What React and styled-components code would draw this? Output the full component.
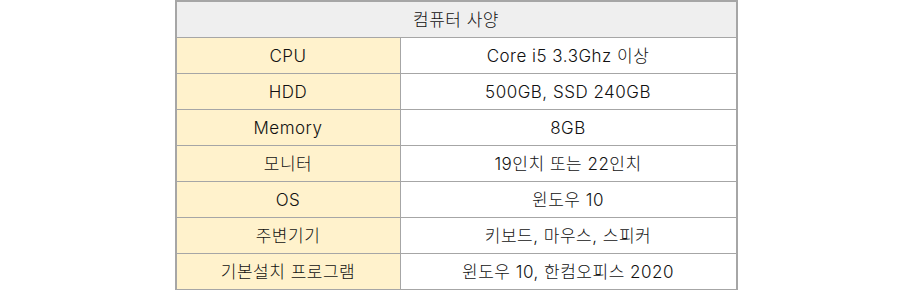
import styled, { createGlobalStyle } from "styled-components";

const GlobalStyle = createGlobalStyle`
  body {
    margin: 0;
    background: #fff;
    font-family: Inter, "Noto Sans CJK KR", sans-serif;
  }
`;

const Wrapper = styled.div`
  display: flex;
  justify-content: center;
`;

const SpecTable = styled.table`
  width: 563px;
  border-collapse: collapse;
  border: 2px solid #a6a6a6;
  font-size: 17px;
  font-weight: 300;
  letter-spacing: 0.5px;
  color: #111;
`;

const HeaderCell = styled.th`
  height: 35px;
  padding: 0;
  line-height: 20px;
  font-weight: 300;
  background: #efefef;
  border: 1px solid #a6a6a6;
`;

const Cell = styled.td`
  height: 35px;
  padding: 0;
  line-height: 20px;
  text-align: center;
  border: 1px solid #a6a6a6;
  background: ${(props) => (props.$label ? "#fff2cc" : "#fff")};
  width: ${(props) => (props.$label ? "223px" : "auto")};
`;

const specs = [
  ["CPU", "Core i5 3.3Ghz 이상"],
  ["HDD", "500GB, SSD 240GB"],
  ["Memory", "8GB"],
  ["모니터", "19인치 또는 22인치"],
  ["OS", "윈도우 10"],
  ["주변기기", "키보드, 마우스, 스피커"],
  ["기본설치 프로그램", "윈도우 10, 한컴오피스 2020"],
];

const App = () => {
  return (
    <>
      <GlobalStyle />
      <Wrapper>
        <SpecTable>
          <thead>
            <tr>
              <HeaderCell colSpan={2}>컴퓨터 사양</HeaderCell>
            </tr>
          </thead>
          <tbody>
            {specs.map(([name, value]) => (
              <tr key={name}>
                <Cell $label>{name}</Cell>
                <Cell>{value}</Cell>
              </tr>
            ))}
          </tbody>
        </SpecTable>
      </Wrapper>
    </>
  );
};

export default App;
